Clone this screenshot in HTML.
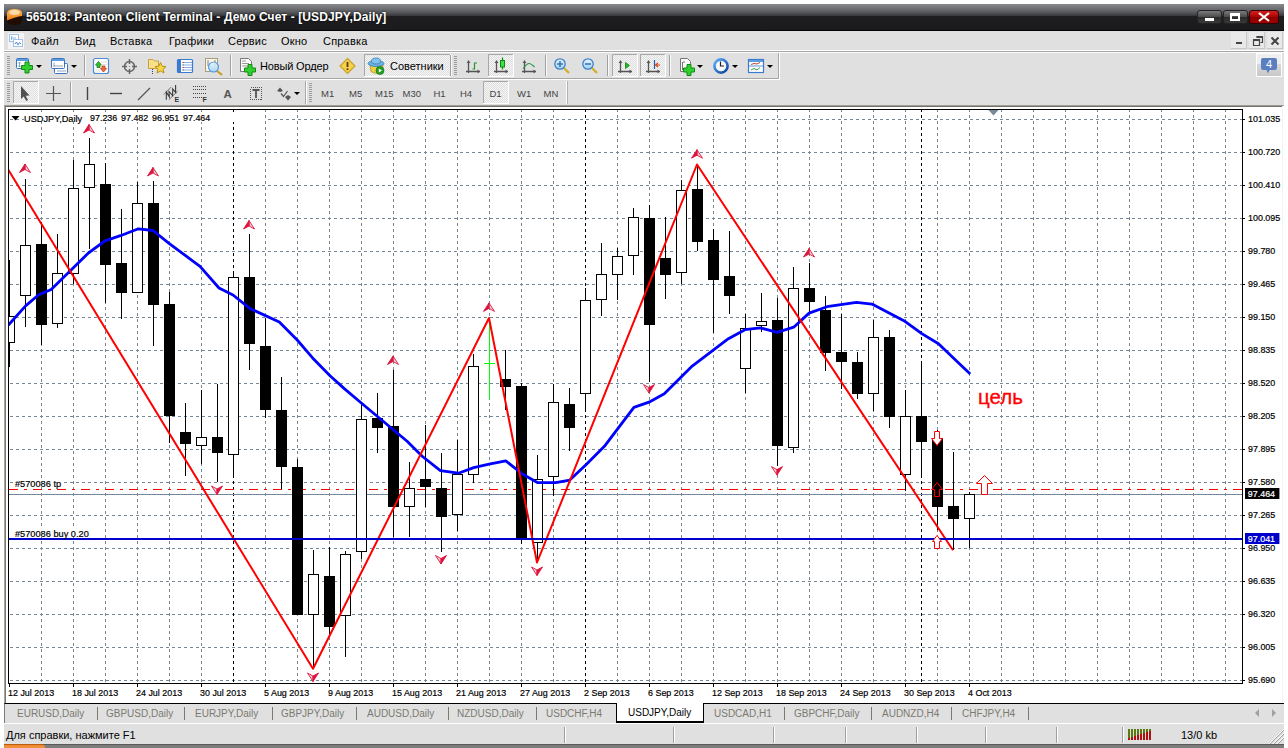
<!DOCTYPE html>
<html><head><meta charset="utf-8"><style>
html,body{margin:0;padding:0;width:1288px;height:748px;overflow:hidden;background:#fff;position:relative}
.ax{position:absolute;font:9.6px 'Liberation Sans', sans-serif;color:#000;white-space:nowrap;line-height:12px;transform:scaleX(0.93);transform-origin:0 0;-webkit-text-stroke:0.2px #000}
</style></head><body>
<div style="position:absolute;left:4px;top:4px;width:1280px;height:27px;background:linear-gradient(#8a8b8f 0px,#5a5b5f 8px,#3a3b3e 11.5px,#1e1e20 12.5px,#1b1b1d 25.5px,#000 26px)"></div>
<svg style="position:absolute;left:6px;top:8px" width="17" height="18"><defs><linearGradient id="ico" x1="0" y1="0" x2="0" y2="1"><stop offset="0" stop-color="#ffc060"/><stop offset="1" stop-color="#f07a10"/></linearGradient></defs><path d="M1 5Q1 1 8.5 1Q16 1 16 5V13Q16 17 8.5 17Q1 17 1 13Z" fill="#200c00"/><path d="M1 5Q1 1 8.5 1Q16 1 16 5V8Q10 8.5 1 12.5Z" fill="url(#ico)"/><ellipse cx="8.5" cy="4.5" rx="5" ry="2.5" fill="#fff" fill-opacity="0.55"/></svg>
<div style="position:absolute;left:26px;top:10px;letter-spacing:0.1px;font:bold 12px 'Liberation Sans', sans-serif;color:#fff;white-space:nowrap;text-shadow:0 0 2px #000">565018: Panteon Client Terminal - Демо Счет - [USDJPY,Daily]</div>
<div style="position:absolute;left:1197px;top:10px;width:25px;height:14px;border:1px solid #222;border-radius:3px;background:linear-gradient(#7a7a7a,#4a4a4a 50%,#2a2a2a 51%,#3a3a3a);box-sizing:border-box"></div>
<div style="position:absolute;left:1205px;top:18px;width:9px;height:3px;background:#fff"></div>
<div style="position:absolute;left:1223px;top:10px;width:25px;height:14px;border:1px solid #222;border-radius:3px;background:linear-gradient(#7a7a7a,#4a4a4a 50%,#2a2a2a 51%,#3a3a3a);box-sizing:border-box"></div>
<div style="position:absolute;left:1230px;top:13px;width:10px;height:8px;border:2px solid #fff;border-top-width:3px;box-sizing:border-box"></div>
<div style="position:absolute;left:1249px;top:10px;width:30px;height:14px;border:1px solid #300;border-radius:3px;background:linear-gradient(#d02020,#b00000 50%,#8a0000 51%,#a00000);box-sizing:border-box"></div>
<svg style="position:absolute;left:1258px;top:12px" width="12" height="10"><path d="M1 1L11 9M11 1L1 9" stroke="#fff" stroke-width="2.2"/></svg>
<div style="position:absolute;left:4px;top:31px;width:1280px;height:74px;background:#e0e0e0"></div>
<div style="position:absolute;left:4px;top:50px;width:1280px;height:1px;background:#fff"></div>
<div style="position:absolute;left:4px;top:51px;width:1280px;height:1px;background:#a6a6a6"></div><div style="position:absolute;left:4px;top:52px;width:1280px;height:1px;background:#fafafa"></div>
<div style="position:absolute;left:4px;top:78px;width:775px;height:1px;background:#a6a6a6"></div>
<div style="position:absolute;left:4px;top:79px;width:776px;height:1px;background:#fff"></div><div style="position:absolute;left:779px;top:52px;width:1px;height:27px;background:#fff"></div>
<svg style="position:absolute;left:8px;top:33px" width="16" height="16"><rect x="0" y="0" width="16" height="16" fill="#f4f4f4"/><rect x="1.5" y="1.5" width="9" height="7" fill="#fff" stroke="#4a8ad8" stroke-dasharray="1 1"/><rect x="5.5" y="6.5" width="9" height="7" fill="#fff" stroke="#4a8ad8" stroke-dasharray="1 1"/><path d="M7 11L8.5 9L10 12L11.5 9.5L13 11" stroke="#4a8ad8" fill="none"/><path d="M3.5 3V7M3 5H8" stroke="#6aa0e0" stroke-width="0.8"/></svg>
<div style="position:absolute;left:31px;top:35px;font:11px 'Liberation Sans', sans-serif;letter-spacing:0.2px;color:#000">Файл</div>
<div style="position:absolute;left:75px;top:35px;font:11px 'Liberation Sans', sans-serif;letter-spacing:0.2px;color:#000">Вид</div>
<div style="position:absolute;left:110px;top:35px;font:11px 'Liberation Sans', sans-serif;letter-spacing:0.2px;color:#000">Вставка</div>
<div style="position:absolute;left:169px;top:35px;font:11px 'Liberation Sans', sans-serif;letter-spacing:0.2px;color:#000">Графики</div>
<div style="position:absolute;left:228px;top:35px;font:11px 'Liberation Sans', sans-serif;letter-spacing:0.2px;color:#000">Сервис</div>
<div style="position:absolute;left:281px;top:35px;font:11px 'Liberation Sans', sans-serif;letter-spacing:0.2px;color:#000">Окно</div>
<div style="position:absolute;left:323px;top:35px;font:11px 'Liberation Sans', sans-serif;letter-spacing:0.2px;color:#000">Справка</div>
<div style="position:absolute;left:1231px;top:32px;width:16px;height:17px;background:#e9e9e9;border-right:1px solid #c8c8c8;border-bottom:1px solid #c8c8c8;box-sizing:border-box"></div>
<div style="position:absolute;left:1249px;top:32px;width:16px;height:17px;background:#e9e9e9;border-right:1px solid #c8c8c8;border-bottom:1px solid #c8c8c8;box-sizing:border-box"></div>
<div style="position:absolute;left:1267px;top:32px;width:16px;height:17px;background:#e9e9e9;border-right:1px solid #c8c8c8;border-bottom:1px solid #c8c8c8;box-sizing:border-box"></div>
<div style="position:absolute;left:1236px;top:42px;width:6px;height:2px;background:#444"></div>
<svg style="position:absolute;left:1252px;top:35px" width="12" height="12"><path d="M4.5 1.5H10.5V7.5H8.5M1.5 4.5H7.5V10.5H1.5Z" stroke="#444" fill="none" stroke-width="1.2"/><path d="M4.5 2H10.5M1.5 5H7.5" stroke="#444" stroke-width="2"/></svg>
<svg style="position:absolute;left:1270px;top:36px" width="10" height="10"><path d="M1.5 1.5L8.5 8.5M8.5 1.5L1.5 8.5" stroke="#444" stroke-width="2"/></svg>
<div style="position:absolute;left:4px;top:105px;width:1280px;height:598px;background:#fff;border-top:1px solid #a09d94;border-left:1px solid #a6a49c;box-sizing:border-box"></div><div style="position:absolute;left:5px;top:106px;width:1277px;height:1px;background:#74716a"></div><div style="position:absolute;left:5px;top:106px;width:1px;height:597px;background:#7d7a70"></div>
<div style="position:absolute;left:1282px;top:106px;width:1px;height:597px;background:#f4f4f4"></div>
<div style="position:absolute;left:4px;top:703px;width:1280px;height:20px;background:#e0e0e0;border-top:1px solid #000;border-left:1px solid #7d7a70;box-sizing:border-box"></div>
<div style="position:absolute;left:17px;top:708px;font:10px 'Liberation Sans', sans-serif;color:#7a7a70">EURUSD,Daily</div>
<div style="position:absolute;left:106px;top:708px;font:10px 'Liberation Sans', sans-serif;color:#7a7a70">GBPUSD,Daily</div>
<div style="position:absolute;left:195px;top:708px;font:10px 'Liberation Sans', sans-serif;color:#7a7a70">EURJPY,Daily</div>
<div style="position:absolute;left:281px;top:708px;font:10px 'Liberation Sans', sans-serif;color:#7a7a70">GBPJPY,Daily</div>
<div style="position:absolute;left:367px;top:708px;font:10px 'Liberation Sans', sans-serif;color:#7a7a70">AUDUSD,Daily</div>
<div style="position:absolute;left:457px;top:708px;font:10px 'Liberation Sans', sans-serif;color:#7a7a70">NZDUSD,Daily</div>
<div style="position:absolute;left:546px;top:708px;font:10px 'Liberation Sans', sans-serif;color:#7a7a70">USDCHF,H4</div>
<div style="position:absolute;left:714px;top:708px;font:10px 'Liberation Sans', sans-serif;color:#7a7a70">USDCAD,H1</div>
<div style="position:absolute;left:794px;top:708px;font:10px 'Liberation Sans', sans-serif;color:#7a7a70">GBPCHF,Daily</div>
<div style="position:absolute;left:882px;top:708px;font:10px 'Liberation Sans', sans-serif;color:#7a7a70">AUDNZD,H4</div>
<div style="position:absolute;left:962px;top:708px;font:10px 'Liberation Sans', sans-serif;color:#7a7a70">CHFJPY,H4</div>
<div style="position:absolute;left:97px;top:707px;width:1px;height:13px;background:#7a7a70"></div>
<div style="position:absolute;left:184px;top:707px;width:1px;height:13px;background:#7a7a70"></div>
<div style="position:absolute;left:272px;top:707px;width:1px;height:13px;background:#7a7a70"></div>
<div style="position:absolute;left:356px;top:707px;width:1px;height:13px;background:#7a7a70"></div>
<div style="position:absolute;left:448px;top:707px;width:1px;height:13px;background:#7a7a70"></div>
<div style="position:absolute;left:536px;top:707px;width:1px;height:13px;background:#7a7a70"></div>
<div style="position:absolute;left:784px;top:707px;width:1px;height:13px;background:#7a7a70"></div>
<div style="position:absolute;left:871px;top:707px;width:1px;height:13px;background:#7a7a70"></div>
<div style="position:absolute;left:951px;top:707px;width:1px;height:13px;background:#7a7a70"></div>
<div style="position:absolute;left:1028px;top:707px;width:1px;height:13px;background:#7a7a70"></div>
<div style="position:absolute;left:616px;top:703px;width:88px;height:20px;background:#fff;border:1px solid #000;border-top:none;border-bottom-width:2px;box-sizing:border-box;font:10px 'Liberation Sans', sans-serif;color:#000;padding:4px 0 0 11px">USDJPY,Daily</div>
<svg style="position:absolute;left:1255px;top:709px" width="22" height="8"><path d="M0 4L4 0V8Z M21 4L17 0V8Z" fill="#a0a0a0"/></svg>
<div style="position:absolute;left:4px;top:723px;width:1280px;height:21px;background:#e0e0e0;border-top:1px solid #fff;box-sizing:border-box"></div>
<div style="position:absolute;left:6px;top:729px;font:11px 'Liberation Sans', sans-serif;color:#000">Для справки, нажмите F1</div>
<div style="position:absolute;left:564px;top:727px;width:1px;height:16px;background:#a0a0a0;border-right:1px solid #fff"></div>
<div style="position:absolute;left:673px;top:727px;width:1px;height:16px;background:#a0a0a0;border-right:1px solid #fff"></div>
<div style="position:absolute;left:773px;top:727px;width:1px;height:16px;background:#a0a0a0;border-right:1px solid #fff"></div>
<div style="position:absolute;left:845px;top:727px;width:1px;height:16px;background:#a0a0a0;border-right:1px solid #fff"></div>
<div style="position:absolute;left:916px;top:727px;width:1px;height:16px;background:#a0a0a0;border-right:1px solid #fff"></div>
<div style="position:absolute;left:985px;top:727px;width:1px;height:16px;background:#a0a0a0;border-right:1px solid #fff"></div>
<div style="position:absolute;left:1056px;top:727px;width:1px;height:16px;background:#a0a0a0;border-right:1px solid #fff"></div>
<div style="position:absolute;left:1122px;top:727px;width:1px;height:16px;background:#a0a0a0;border-right:1px solid #fff"></div>
<svg style="position:absolute;left:1128px;top:729px" width="24" height="12"><rect x="0" y="0" width="2" height="11" fill="#5a7a10"/><rect x="0" y="9.0" width="2" height="2.0" fill="#b01010"/><rect x="3" y="0" width="2" height="11" fill="#5a7a10"/><rect x="3" y="8.0" width="2" height="3.0" fill="#b01010"/><rect x="6" y="0" width="2" height="11" fill="#5a7a10"/><rect x="6" y="7.0" width="2" height="4.0" fill="#b01010"/><rect x="9" y="0" width="2" height="11" fill="#5a7a10"/><rect x="9" y="6.0" width="2" height="5.0" fill="#b01010"/><rect x="12" y="0" width="2" height="11" fill="#5a7a10"/><rect x="12" y="5.0" width="2" height="6.0" fill="#b01010"/><rect x="15" y="0" width="2" height="11" fill="#5a7a10"/><rect x="15" y="4.0" width="2" height="7.0" fill="#b01010"/><rect x="18" y="0" width="2" height="11" fill="#5a7a10"/><rect x="18" y="3.0" width="2" height="8.0" fill="#b01010"/><rect x="21" y="0" width="2" height="11" fill="#5a7a10"/><rect x="21" y="2.0" width="2" height="9.0" fill="#b01010"/></svg>
<div style="position:absolute;left:1181px;top:729px;font:11px 'Liberation Sans', sans-serif;color:#000">13/0 kb</div>
<svg style="position:absolute;left:1268px;top:728px" width="16" height="16"><path d="M16 1L1 16M16 5L5 16M16 9L9 16" stroke="#fff" stroke-width="1"/><path d="M16 2L2 16M16 6L6 16M16 10L10 16" stroke="#a0a0a0" stroke-width="1"/></svg>
<div style="position:absolute;left:4px;top:744px;width:1280px;height:4px;background:linear-gradient(#5a5a5a 0,#5a5a5a 1px,#7d7d7d 1px)"></div>
<div style="position:absolute;left:4px;top:744px;width:41px;height:4px;background:linear-gradient(#b85a10 0,#c06010 1px,#f08a30 1.5px,#f49040);border-radius:0 4px 0 0"></div>
<svg width="1288" height="106" style="position:absolute;left:0;top:0">
<defs><pattern id="chk" width="2" height="2" patternUnits="userSpaceOnUse"><rect width="2" height="2" fill="#f6f6f6"/><rect width="1" height="1" fill="#dedede"/><rect x="1" y="1" width="1" height="1" fill="#dedede"/></pattern><linearGradient id="clk" x1="0" y1="0" x2="1" y2="1"><stop offset="0" stop-color="#5ab0ff"/><stop offset="1" stop-color="#0a3e98"/></linearGradient><linearGradient id="mag" x1="0" y1="0" x2="0" y2="1"><stop offset="0" stop-color="#e8f6ff"/><stop offset="1" stop-color="#9fd0f0"/></linearGradient><linearGradient id="nb" x1="0" y1="0" x2="0" y2="1"><stop offset="0" stop-color="#f0f0f0"/><stop offset="0.45" stop-color="#ececec"/><stop offset="0.46" stop-color="#d8d8d8"/><stop offset="1" stop-color="#c8c8c8"/></linearGradient></defs>
<rect x="7" y="56" width="3" height="1" fill="#9c9c9c"/><rect x="7" y="58" width="3" height="1" fill="#9c9c9c"/><rect x="7" y="60" width="3" height="1" fill="#9c9c9c"/><rect x="7" y="62" width="3" height="1" fill="#9c9c9c"/><rect x="7" y="64" width="3" height="1" fill="#9c9c9c"/><rect x="7" y="66" width="3" height="1" fill="#9c9c9c"/><rect x="7" y="68" width="3" height="1" fill="#9c9c9c"/><rect x="7" y="70" width="3" height="1" fill="#9c9c9c"/><rect x="7" y="72" width="3" height="1" fill="#9c9c9c"/><rect x="7" y="74" width="3" height="1" fill="#9c9c9c"/>
<rect x="16.5" y="58.5" width="12" height="10" rx="1" fill="#fff" stroke="#3a74c0"/><rect x="17" y="59" width="11" height="2" fill="#5b9be0"/>
<path d="M19.5 62V67M18 63.5L19.5 62L21 63.5M18 65.5L19.5 67L21 65.5" stroke="#7890a8" stroke-width="0.8" fill="none"/>
<path d="M25.0 62.0H29.0V65.5H32.5V69.5H29.0V73.0H25.0V69.5H21.5V65.5H25.0Z" fill="#30d030" stroke="#138a13" stroke-width="1"/>
<path d="M36 65H42L39 68Z" fill="#000"/>
<rect x="54.5" y="63.5" width="13" height="10" rx="1" fill="#fff" stroke="#3a74c0"/><rect x="51.5" y="58.5" width="13" height="10" rx="1" fill="#fff" stroke="#3a74c0"/><rect x="52" y="59" width="12" height="2" fill="#5b9be0"/>
<path d="M54 62.5V67M54 66H63M57 71H66" stroke="#7890a8" stroke-width="0.8" fill="none"/>
<path d="M71 65H77L74 68Z" fill="#000"/>
<rect x="84" y="55" width="1" height="21" fill="#a0a0a0"/><rect x="85" y="55" width="1" height="21" fill="#fafafa"/>
<rect x="93.5" y="58.5" width="15" height="15" rx="2" fill="#fff" stroke="#4a8ad8" stroke-width="1.2"/>
<path d="M95.5 65L98.5 61.5L101.5 65H100V67.5H97V65Z" fill="#30c030" stroke="#158015" stroke-width="0.8"/>
<path d="M100.5 68.5H102V66H105V68.5H106.5L103.5 72Z" fill="#f06a3a" stroke="#c03a10" stroke-width="0.8"/>
<path d="M101 62H107M101 64.5H107M95 70H100M95 72H100" stroke="#d0d0d0" stroke-width="0.6"/>
<circle cx="129.5" cy="66.5" r="5" fill="none" stroke="#666" stroke-width="1.5"/><path d="M122 66.5H127M132 66.5H137M129.5 59V64M129.5 69V74" stroke="#666" stroke-width="1.5"/><rect x="129" y="66" width="1" height="1" fill="#888"/>
<path d="M148.5 59.5H153L154.5 61H158.5V68.5H148.5Z" fill="#f8e08a" stroke="#c8a040" stroke-width="1"/>
<path d="M160.5 62.5L162.2 66.2L166 66.6L163.1 69.2L164 73L160.5 71L157 73L157.9 69.2L155 66.6L158.8 66.2Z" fill="#f8d840" stroke="#b8901a" stroke-width="1"/>
<path d="M152.5 69V75" stroke="#444" stroke-width="1" stroke-dasharray="1 1"/>
<rect x="177.5" y="59.5" width="15" height="13" rx="1" fill="#fff" stroke="#3a7ad0" stroke-width="1.2"/><rect x="178" y="60" width="3" height="12" fill="#3a7ad0"/>
<path d="M183 62.5H192M183 65H192M183 67.5H192M183 70H192" stroke="#3a7ad0" stroke-width="0.6"/><path d="M182.5 62.5h1M182.5 67.5h1" stroke="#e00" stroke-width="1"/><path d="M182.5 65h1M182.5 70h1" stroke="#222" stroke-width="1"/>
<rect x="205.5" y="58.5" width="12" height="13" fill="#faf6ea" stroke="#a89c80"/>
<path d="M208 60V66M215 60V66" stroke="#666" stroke-width="0.8"/>
<path d="M216.5 70.5L222 75" stroke="#c8a020" stroke-width="2.2"/><circle cx="213.5" cy="67" r="5" fill="url(#mag)" fill-opacity="0.85" stroke="#5aa0e0" stroke-width="1.2"/>
<rect x="230" y="55" width="1" height="21" fill="#a0a0a0"/><rect x="231" y="55" width="1" height="21" fill="#fafafa"/>
<path d="M240.5 58.5H248.5L251.5 61.5V71.5H240.5Z" fill="#fafafa" stroke="#777"/><path d="M242 61H246M242 63.5H249M242 66H249" stroke="#999" stroke-width="1"/>
<path d="M248.0 64.5H252.0V68.0H255.5V72.0H252.0V75.5H248.0V72.0H244.5V68.0H248.0Z" fill="#30d030" stroke="#138a13" stroke-width="1"/>
<path d="M347.5 58.5L355 66L347.5 73.5L340 66Z" fill="#f6d24a" stroke="#c8a02a" stroke-width="1.2"/><path d="M347.5 62V67" stroke="#5a3a10" stroke-width="1.8"/><rect x="346.6" y="68.3" width="1.8" height="1.8" fill="#5a3a10"/>
<rect x="364" y="54" width="87" height="23" fill="url(#chk)"/><path d="M364.5 77V54.5H451" stroke="#a8a8a8" fill="none"/><path d="M364 76.5H450.5V54" stroke="#fff" fill="none"/>
<path d="M370 65L371 71.5Q376 75 382 71.5L383 65Z" fill="#f0d040" stroke="#b09020" stroke-width="0.8"/>
<ellipse cx="376" cy="63.5" rx="8" ry="3" fill="#6ab0e0" stroke="#3a80b8" stroke-width="0.8"/><ellipse cx="376" cy="61" rx="4.5" ry="3" fill="#80c4ee" stroke="#3a80b8" stroke-width="0.8"/>
<circle cx="380" cy="70.5" r="4" fill="#22a022" stroke="#116611" stroke-width="0.6"/><path d="M378.8 68.5V72.5L382 70.5Z" fill="#fff"/>
<rect x="450" y="55" width="1" height="21" fill="#a0a0a0"/><rect x="451" y="55" width="1" height="21" fill="#fafafa"/>
<rect x="454" y="56" width="3" height="1" fill="#9c9c9c"/><rect x="454" y="58" width="3" height="1" fill="#9c9c9c"/><rect x="454" y="60" width="3" height="1" fill="#9c9c9c"/><rect x="454" y="62" width="3" height="1" fill="#9c9c9c"/><rect x="454" y="64" width="3" height="1" fill="#9c9c9c"/><rect x="454" y="66" width="3" height="1" fill="#9c9c9c"/><rect x="454" y="68" width="3" height="1" fill="#9c9c9c"/><rect x="454" y="70" width="3" height="1" fill="#9c9c9c"/><rect x="454" y="72" width="3" height="1" fill="#9c9c9c"/><rect x="454" y="74" width="3" height="1" fill="#9c9c9c"/>
<path d="M468.5 60.5V73 M466.0 71.5H480" stroke="#555" stroke-width="1.3" fill="none"/><path d="M466.5 63.0L468.5 60.5L470.5 63.0Z M477.5 69.5L480 71.5L477.5 73.5Z" fill="#555"/>
<path d="M472.5 69H474.5V63H477" stroke="#229922" stroke-width="1.2" fill="none"/>
<rect x="488" y="54" width="26" height="23" fill="url(#chk)"/><path d="M488.5 77V54.5H514" stroke="#a8a8a8" fill="none"/><path d="M488 76.5H513.5V54" stroke="#fff" fill="none"/>
<path d="M496.5 60.5V73 M494.0 71.5H508" stroke="#555" stroke-width="1.3" fill="none"/><path d="M494.5 63.0L496.5 60.5L498.5 63.0Z M505.5 69.5L508 71.5L505.5 73.5Z" fill="#555"/>
<path d="M502.5 57.5V69.5" stroke="#118811" stroke-width="1.2"/><rect x="500.5" y="60.5" width="4" height="6.5" fill="#44e044" stroke="#118811" stroke-width="1"/>
<path d="M524.5 60.5V73 M522.0 71.5H536" stroke="#555" stroke-width="1.3" fill="none"/><path d="M522.5 63.0L524.5 60.5L526.5 63.0Z M533.5 69.5L536 71.5L533.5 73.5Z" fill="#555"/>
<path d="M523 68.5Q527 63.5 529 63.5Q531 63.5 534.5 67" stroke="#229944" stroke-width="1.1" fill="none"/>
<rect x="545" y="55" width="1" height="21" fill="#a0a0a0"/><rect x="546" y="55" width="1" height="21" fill="#fafafa"/>
<path d="M564 68L569 73" stroke="#d0b030" stroke-width="2.4"/>
<circle cx="560" cy="64" r="5.2" fill="url(#mag)" stroke="#3a80c8" stroke-width="1.3"/>
<path d="M557 64H563M560 61V67" stroke="#3a78b0" stroke-width="1.6"/>
<path d="M592 68L597 73" stroke="#d0b030" stroke-width="2.4"/>
<circle cx="588" cy="64" r="5.2" fill="url(#mag)" stroke="#3a80c8" stroke-width="1.3"/>
<path d="M585 64H591" stroke="#3a78b0" stroke-width="1.6"/>
<rect x="607" y="55" width="1" height="21" fill="#a0a0a0"/><rect x="608" y="55" width="1" height="21" fill="#fafafa"/>
<rect x="612" y="54" width="26" height="23" fill="url(#chk)"/><path d="M612.5 77V54.5H638" stroke="#a8a8a8" fill="none"/><path d="M612 76.5H637.5V54" stroke="#fff" fill="none"/>
<path d="M620.5 60.5V73 M618.0 71.5H632" stroke="#555" stroke-width="1.3" fill="none"/><path d="M618.5 63.0L620.5 60.5L622.5 63.0Z M629.5 69.5L632 71.5L629.5 73.5Z" fill="#555"/>
<path d="M625.5 62.5V68.5L629.5 65.5Z" fill="#22bb22" stroke="#118811" stroke-width="0.8"/>
<rect x="640" y="54" width="26" height="23" fill="url(#chk)"/><path d="M640.5 77V54.5H666" stroke="#a8a8a8" fill="none"/><path d="M640 76.5H665.5V54" stroke="#fff" fill="none"/>
<path d="M648.5 60.5V73 M646.0 71.5H660" stroke="#555" stroke-width="1.3" fill="none"/><path d="M646.5 63.0L648.5 60.5L650.5 63.0Z M657.5 69.5L660 71.5L657.5 73.5Z" fill="#555"/>
<path d="M654.5 60V69" stroke="#2060b0" stroke-width="1.2"/><path d="M660 65H656.5M658 63L655.5 65L658 67" stroke="#e04010" stroke-width="1.2" fill="none"/>
<rect x="669" y="55" width="1" height="21" fill="#a0a0a0"/><rect x="670" y="55" width="1" height="21" fill="#fafafa"/>
<path d="M680.5 58.5H687.5L690.5 61.5V71.5H680.5Z" fill="#fafafa" stroke="#777"/><path d="M682.5 62V70M683 62H685" stroke="#555" stroke-width="0.8"/>
<path d="M687.0 64.5H691.0V68.0H694.5V72.0H691.0V75.5H687.0V72.0H683.5V68.0H687.0Z" fill="#30d030" stroke="#138a13" stroke-width="1"/>
<path d="M697 65H703L700 68Z" fill="#000"/>
<circle cx="721" cy="66" r="6.6" fill="#f6f8fa" stroke="url(#clk)" stroke-width="2.6"/><path d="M720.5 61.5V66H724" stroke="#222" stroke-width="1.2" fill="none"/><path d="M721 59.8v0.8M726.4 66h-0.8M721 72.2v-0.8M715.6 66h0.8" stroke="#999" stroke-width="0.7"/>
<path d="M732 65H738L735 68Z" fill="#000"/>
<rect x="748.5" y="59.5" width="15" height="13" fill="#fff" stroke="#3a7ad0" stroke-width="1.2"/><rect x="749" y="60" width="14" height="2" fill="#5b9be0"/><path d="M749 66H763" stroke="#3a7ad0" stroke-width="0.8"/>
<path d="M751 64.5L754 63.5L757 64L760 62.5" stroke="#b03020" stroke-width="0.9" fill="none"/><path d="M751 70L754 68.5L757 70L760 67.5" stroke="#209030" stroke-width="0.9" fill="none"/>
<path d="M767 65H773L770 68Z" fill="#000"/>
<rect x="778" y="53" width="1" height="25" fill="#a8a8a8"/>
<rect x="1256.5" y="53.5" width="25" height="23" fill="url(#nb)" stroke="#fff"/>
<path d="M1263 58H1275Q1277 58 1277 60V68Q1277 70 1275 70H1269.5L1268 73.5L1266.5 70H1263Q1261 70 1261 68V60Q1261 58 1263 58Z" fill="#5a7fc0"/>
<text x="1266" y="68" font-family="Liberation Sans" font-size="11" fill="#fff">4</text>
<rect x="7" y="83" width="3" height="1" fill="#9c9c9c"/><rect x="7" y="85" width="3" height="1" fill="#9c9c9c"/><rect x="7" y="87" width="3" height="1" fill="#9c9c9c"/><rect x="7" y="89" width="3" height="1" fill="#9c9c9c"/><rect x="7" y="91" width="3" height="1" fill="#9c9c9c"/><rect x="7" y="93" width="3" height="1" fill="#9c9c9c"/><rect x="7" y="95" width="3" height="1" fill="#9c9c9c"/><rect x="7" y="97" width="3" height="1" fill="#9c9c9c"/><rect x="7" y="99" width="3" height="1" fill="#9c9c9c"/><rect x="7" y="101" width="3" height="1" fill="#9c9c9c"/>
<rect x="13" y="81" width="26" height="23" fill="url(#chk)"/><path d="M13.5 104V81.5H39" stroke="#a8a8a8" fill="none"/><path d="M13 103.5H38.5V81" stroke="#fff" fill="none"/>
<path d="M21 86V99L23.7 96.5L26.2 101L28 100L25.7 95.8L29.5 95.5Z" fill="#505050"/>
<path d="M46 93.5H61M53.5 86V101" stroke="#555" stroke-width="1.2"/>
<rect x="70" y="82" width="1" height="21" fill="#a0a0a0"/><rect x="71" y="82" width="1" height="21" fill="#fafafa"/>
<path d="M87.5 87V100" stroke="#444" stroke-width="1.4"/>
<path d="M110 93.5H122" stroke="#444" stroke-width="1.4"/>
<path d="M138 100L150 88" stroke="#555" stroke-width="1.2"/>
<path d="M163.8 94.5L171.4 86.9M168.9 99.7L177.7 91.1" stroke="#666" stroke-width="0.9"/><path d="M166.3 99.7L166.4 92.2L169.3 96.8L169 91.5L172.6 95.5L172.7 88.9L175.6 92.4L175.6 85" stroke="#3a3a3a" stroke-width="1.1" fill="none"/>
<text x="174.6" y="101.9" font-family="Liberation Sans" font-weight="bold" font-size="7" fill="#333">E</text>
<path d="M193 86.5H206M193 89.5H206M193 93.5H206M193 97.5H202" stroke="#444" stroke-width="1" stroke-dasharray="1 1" shape-rendering="crispEdges"/>
<text x="202.6" y="101.9" font-family="Liberation Sans" font-weight="bold" font-size="7" fill="#333">F</text>
<text x="223.5" y="98" font-family="Liberation Sans" font-weight="bold" font-size="11.5" fill="#555">A</text>
<rect x="250.5" y="87.5" width="11" height="12" fill="none" stroke="#555" stroke-width="1" stroke-dasharray="1 1" shape-rendering="crispEdges"/><path d="M252.5 90H259.5M256 90V98" stroke="#555" stroke-width="1.8"/>
<path d="M277 91L280 87.5L283 91L280 92Z" fill="#555"/><path d="M281 93.5L283.5 96.5L287.5 91" stroke="#555" stroke-width="1.2" fill="none"/><path d="M285 97L288 95L291 97L288 100.5Z" fill="#555"/>
<path d="M294 92H300L297 95Z" fill="#000"/>
<rect x="305" y="81" width="1" height="23" fill="#a8a8a8"/><rect x="306" y="81" width="1" height="23" fill="#fff"/>
<rect x="309" y="83" width="3" height="1" fill="#9c9c9c"/><rect x="309" y="85" width="3" height="1" fill="#9c9c9c"/><rect x="309" y="87" width="3" height="1" fill="#9c9c9c"/><rect x="309" y="89" width="3" height="1" fill="#9c9c9c"/><rect x="309" y="91" width="3" height="1" fill="#9c9c9c"/><rect x="309" y="93" width="3" height="1" fill="#9c9c9c"/><rect x="309" y="95" width="3" height="1" fill="#9c9c9c"/><rect x="309" y="97" width="3" height="1" fill="#9c9c9c"/><rect x="309" y="99" width="3" height="1" fill="#9c9c9c"/><rect x="309" y="101" width="3" height="1" fill="#9c9c9c"/>
<rect x="483" y="81" width="26" height="23" fill="url(#chk)"/><path d="M483.5 104V81.5H509" stroke="#a8a8a8" fill="none"/><path d="M483 103.5H508.5V81" stroke="#fff" fill="none"/>
<rect x="566" y="81" width="1" height="23" fill="#fff"/><rect x="567" y="81" width="1" height="23" fill="#b0b0b0"/>
</svg>
<div style="position:absolute;left:260px;top:59.5px;font:11px 'Liberation Sans', sans-serif;letter-spacing:-0.15px;color:#000;white-space:nowrap">Новый Ордер</div>
<div style="position:absolute;left:390px;top:59.5px;font:11px 'Liberation Sans', sans-serif;color:#000;white-space:nowrap">Советники</div>
<div style="position:absolute;left:321px;top:88px;font:9.5px 'Liberation Sans', sans-serif;color:#444;white-space:nowrap">M1</div>
<div style="position:absolute;left:349px;top:88px;font:9.5px 'Liberation Sans', sans-serif;color:#444;white-space:nowrap">M5</div>
<div style="position:absolute;left:375px;top:88px;font:9.5px 'Liberation Sans', sans-serif;color:#444;white-space:nowrap">M15</div>
<div style="position:absolute;left:402.5px;top:88px;font:9.5px 'Liberation Sans', sans-serif;color:#444;white-space:nowrap">M30</div>
<div style="position:absolute;left:433.5px;top:88px;font:9.5px 'Liberation Sans', sans-serif;color:#444;white-space:nowrap">H1</div>
<div style="position:absolute;left:460px;top:88px;font:9.5px 'Liberation Sans', sans-serif;color:#444;white-space:nowrap">H4</div>
<div style="position:absolute;left:489.5px;top:88px;font:9.5px 'Liberation Sans', sans-serif;color:#444;white-space:nowrap">D1</div>
<div style="position:absolute;left:517px;top:88px;font:9.5px 'Liberation Sans', sans-serif;color:#444;white-space:nowrap">W1</div>
<div style="position:absolute;left:543.5px;top:88px;font:9.5px 'Liberation Sans', sans-serif;color:#444;white-space:nowrap">MN</div>
<svg width="1288" height="748" style="position:absolute;left:0;top:0">
<defs><clipPath id="pc"><rect x="9" y="110" width="1233" height="573"/></clipPath></defs>
<path d="M10 119.5H1242 M10 152.5H1242 M10 185.5H1242 M10 218.5H1242 M10 251.5H1242 M10 284.5H1242 M10 317.5H1242 M10 350.5H1242 M10 383.5H1242 M10 416.5H1242 M10 449.5H1242 M10 482.5H1242 M10 515.5H1242 M10 548.5H1242 M10 581.5H1242 M10 614.5H1242 M10 647.5H1242 M10 680.5H1242 M41.5 109V683 M73.5 109V683 M105.5 109V683 M137.5 109V683 M169.5 109V683 M201.5 109V683 M265.5 109V683 M297.5 109V683 M329.5 109V683 M361.5 109V683 M393.5 109V683 M425.5 109V683 M457.5 109V683 M489.5 109V683 M521.5 109V683 M553.5 109V683 M617.5 109V683 M649.5 109V683 M681.5 109V683 M713.5 109V683 M745.5 109V683 M777.5 109V683 M809.5 109V683 M841.5 109V683 M873.5 109V683 M905.5 109V683 M937.5 109V683 M969.5 109V683 M1001.5 109V683 M1033.5 109V683 M1065.5 109V683 M1097.5 109V683 M1129.5 109V683 M1161.5 109V683 M1193.5 109V683 M1225.5 109V683" stroke="#778899" stroke-width="1" stroke-dasharray="3 3" fill="none" shape-rendering="crispEdges"/>
<path d="M233.5 109V683 M585.5 109V683 M921.5 109V683" stroke="#000" stroke-width="1" stroke-dasharray="3 3" fill="none" shape-rendering="crispEdges"/>
<g clip-path="url(#pc)">
<path d="M9 489.5H1242" stroke="#ff0000" stroke-width="1" stroke-dasharray="9 6 3 6" shape-rendering="crispEdges"/>
<path d="M9 494.5H1242" stroke="#778899" stroke-width="1" shape-rendering="crispEdges"/>
<path d="M9.5 260V316M9.5 343V367 M25.5 179V245M25.5 296V327 M41.5 222V244M41.5 325V345 M57.5 234V273M57.5 324V328 M73.5 160V188M73.5 274V284 M89.5 138V164M89.5 188V249 M105.5 163V184M105.5 265V303 M121.5 209V263M121.5 293V319 M137.5 182V203M137.5 293V293 M153.5 181V203M153.5 305V346 M169.5 292V304M169.5 416V443 M185.5 403V432M185.5 444V476 M201.5 390V437M201.5 446V464 M217.5 384V437M217.5 453V482 M233.5 272V277M233.5 455V478 M249.5 234V277M249.5 344V370 M265.5 318V346M265.5 410V418 M281.5 377V410M281.5 467V489 M297.5 459V467M297.5 615V615 M313.5 550V574M313.5 615V669 M329.5 547V576M329.5 627V634 M345.5 551V554M345.5 616V657 M361.5 405V419M361.5 552V559 M377.5 393V418M377.5 428V453 M393.5 370V426M393.5 507V537 M409.5 462V488M409.5 507V537 M425.5 425V479M425.5 487V507 M441.5 453V488M441.5 517V552 M457.5 440V474M457.5 515V531 M473.5 354V366M473.5 475V483 M505.5 350V379M505.5 387V410 M521.5 383V386M521.5 540V544 M537.5 455V479M537.5 543V562 M553.5 384V402M553.5 477V496 M569.5 388V404M569.5 428V451 M585.5 288V300M585.5 394V410 M601.5 243V274M601.5 300V316 M617.5 248V256M617.5 275V300 M633.5 208V217M633.5 256V275 M649.5 205V218M649.5 325V382 M665.5 217V258M665.5 275V299 M681.5 180V190M681.5 273V284 M697.5 164V189M697.5 242V251 M713.5 229V240M713.5 280V333 M729.5 231V276M729.5 296V314 M745.5 314V328M745.5 369V393 M761.5 293V321M761.5 326V332 M777.5 298V320M777.5 446V466 M793.5 267V288M793.5 448V453 M809.5 263V288M809.5 302V312 M825.5 296V310M825.5 353V371 M841.5 314V352M841.5 362V389 M857.5 352V362M857.5 394V399 M873.5 320V337M873.5 394V411 M889.5 330V337M889.5 417V428 M905.5 390V416M905.5 475V491 M921.5 362V416M921.5 442V478 M937.5 430V438M937.5 507V530 M953.5 452V506M953.5 519V550 M969.5 492V494M969.5 519V548" stroke="#000" stroke-width="1" fill="none" shape-rendering="crispEdges"/>
<path d="M36 244H47V325H36Z M100 184H111V265H100Z M116 263H127V293H116Z M148 203H159V305H148Z M164 304H175V416H164Z M180 432H191V444H180Z M212 437H223V453H212Z M244 277H255V344H244Z M260 346H271V410H260Z M276 410H287V467H276Z M292 467H303V615H292Z M324 576H335V627H324Z M372 418H383V428H372Z M388 426H399V507H388Z M420 479H431V487H420Z M436 488H447V517H436Z M500 379H511V387H500Z M516 386H527V540H516Z M564 404H575V428H564Z M644 218H655V325H644Z M660 258H671V275H660Z M692 189H703V242H692Z M708 240H719V280H708Z M724 276H735V296H724Z M772 320H783V446H772Z M804 288H815V302H804Z M820 310H831V353H820Z M836 352H847V362H836Z M852 362H863V394H852Z M884 337H895V417H884Z M916 416H927V442H916Z M932 438H943V507H932Z M948 506H959V519H948Z" fill="#000" shape-rendering="crispEdges"/>
<path d="M4.5 316.5H14.5V342.5H4.5Z M20.5 245.5H30.5V295.5H20.5Z M52.5 273.5H62.5V323.5H52.5Z M68.5 188.5H78.5V273.5H68.5Z M84.5 164.5H94.5V187.5H84.5Z M132.5 203.5H142.5V292.5H132.5Z M196.5 437.5H206.5V445.5H196.5Z M228.5 277.5H238.5V454.5H228.5Z M308.5 574.5H318.5V614.5H308.5Z M340.5 554.5H350.5V615.5H340.5Z M356.5 419.5H366.5V551.5H356.5Z M404.5 488.5H414.5V506.5H404.5Z M452.5 474.5H462.5V514.5H452.5Z M468.5 366.5H478.5V474.5H468.5Z M532.5 479.5H542.5V542.5H532.5Z M548.5 402.5H558.5V476.5H548.5Z M580.5 300.5H590.5V393.5H580.5Z M596.5 274.5H606.5V299.5H596.5Z M612.5 256.5H622.5V274.5H612.5Z M628.5 217.5H638.5V255.5H628.5Z M676.5 190.5H686.5V272.5H676.5Z M740.5 328.5H750.5V368.5H740.5Z M756.5 321.5H766.5V325.5H756.5Z M788.5 288.5H798.5V447.5H788.5Z M868.5 337.5H878.5V393.5H868.5Z M900.5 416.5H910.5V474.5H900.5Z M964.5 494.5H974.5V518.5H964.5Z" fill="#fff" stroke="#000" stroke-width="1" shape-rendering="crispEdges"/>
<path d="M489.5 318V399M484 363.5H495" stroke="#00ff00" stroke-width="1" fill="none" shape-rendering="crispEdges"/>
<polyline points="8,325.5 25.6,305.9 38.4,295 51.2,289.5 88.4,253 105,240.8 120.4,235.7 138.4,228.8 153,230.5 169,243.3 200,266.4 219,288 233,295 249.8,308.4 279.3,322 297.2,340 312.6,357.9 330,375.8 344.3,388.6 361,402.7 407.1,441.2 422.5,456.5 440.4,470.6 458.4,473.2 473.7,467.6 489.1,464.2 505.8,460.9 522.4,474 537.8,482.7 555.7,482.7 569.8,480.1 586.5,464.2 604.4,446.3 633.9,407.3 649,402.2 664.3,393.8 691.2,366.9 728.4,338.7 745,329.7 760.4,327.9 777.1,332.3 793.7,327.2 809.1,313.1 827,306.7 856.5,302.3 871.9,304.1 903.9,320.7 921.8,333.6 938.5,343.8 946.6,351.5 970.2,374" stroke="#0000ff" stroke-width="2.8" fill="none" stroke-linejoin="round"/>
<polyline points="8,169.2 313,668.7 489,318 537,562.5 697,164.5 953,550.2" stroke="#ff0000" stroke-width="2" fill="none" stroke-linejoin="round"/>
<path d="M9 538.5H1242" stroke="#0000cd" stroke-width="2" shape-rendering="crispEdges"/>
<path d="M30.5 172.5L25 164.0L25 169.5Z M94.5 133L89 124.5L89 130Z M158.5 176L153 167.5L153 173Z M254.5 229L249 220.5L249 226Z M398.5 364.5L393 356.0L393 361.5Z M494.5 311.4L489 302.9L489 308.4Z M702.5 158.2L697 149.7L697 155.2Z M814.5 257L809 248.5L809 254Z M211.5 486L217 494.5L217 489Z M307.5 673L313 681.5L313 676Z M435.5 555.5L441 564.0L441 558.5Z M531.5 567L537 575.5L537 570Z M643.5 384.6L649 393.1L649 387.6Z M771.5 466.6L777 475.1L777 469.6Z" fill="#f7d0d8" stroke="#dc143c" stroke-width="0.9" stroke-linejoin="round"/>
<path d="M19.5 172.5L25 164.0L25 169.5Z M83.5 133L89 124.5L89 130Z M147.5 176L153 167.5L153 173Z M243.5 229L249 220.5L249 226Z M387.5 364.5L393 356.0L393 361.5Z M483.5 311.4L489 302.9L489 308.4Z M691.5 158.2L697 149.7L697 155.2Z M803.5 257L809 248.5L809 254Z M222.5 486L217 494.5L217 489Z M318.5 673L313 681.5L313 676Z M446.5 555.5L441 564.0L441 558.5Z M542.5 567L537 575.5L537 570Z M654.5 384.6L649 393.1L649 387.6Z M782.5 466.6L777 475.1L777 469.6Z" fill="#dc143c" stroke="#dc143c" stroke-width="0.9" stroke-linejoin="round"/>
<path d="M981.5 494.5V483.5H976.5L984.5 475.5L992.5 483.5H987.5V494.5Z" fill="#fff" stroke="#ff0000" stroke-width="1"/>
<path d="M934.5 496.5V489.5H931.5L937 482.5L942.5 489.5H939.5V496.5Z" fill="none" stroke="#ff0000" stroke-width="1"/>
<path d="M934.5 548.5V541.5H932.5L937 535.5L941.5 541.5H939.5V548.5Z" fill="#fff" stroke="#ff0000" stroke-width="1"/>
<path d="M934.5 431.5V438.5H931.5L937 445.5L942.5 438.5H939.5V431.5Z" fill="#fff" stroke="#ff0000" stroke-width="1"/>
</g>
<path d="M988.5 110H998.5L993.5 115.5Z" fill="#778899"/>
<rect x="8.5" y="109.5" width="1233.5" height="573.5" fill="none" stroke="#000" stroke-width="1" shape-rendering="crispEdges"/>
<path d="M1242 119.5H1245 M1242 152.5H1245 M1242 185.5H1245 M1242 218.5H1245 M1242 251.5H1245 M1242 284.5H1245 M1242 317.5H1245 M1242 350.5H1245 M1242 383.5H1245 M1242 416.5H1245 M1242 449.5H1245 M1242 482.5H1245 M1242 515.5H1245 M1242 548.5H1245 M1242 581.5H1245 M1242 614.5H1245 M1242 647.5H1245 M1242 680.5H1245" stroke="#000" stroke-width="1" shape-rendering="crispEdges"/>
<path d="M9.5 683V687 M73.5 683V687 M137.5 683V687 M201.5 683V687 M265.5 683V687 M329.5 683V687 M393.5 683V687 M457.5 683V687 M521.5 683V687 M585.5 683V687 M649.5 683V687 M713.5 683V687 M777.5 683V687 M841.5 683V687 M905.5 683V687 M969.5 683V687" stroke="#000" stroke-width="1" shape-rendering="crispEdges"/>
</svg>
<div class="ax" style="left:1248px;top:112.5px">101.035</div>
<div class="ax" style="left:1248px;top:145.5px">100.720</div>
<div class="ax" style="left:1248px;top:178.5px">100.410</div>
<div class="ax" style="left:1248px;top:211.5px">100.095</div>
<div class="ax" style="left:1248px;top:244.5px">99.780</div>
<div class="ax" style="left:1248px;top:277.5px">99.465</div>
<div class="ax" style="left:1248px;top:310.5px">99.150</div>
<div class="ax" style="left:1248px;top:343.5px">98.835</div>
<div class="ax" style="left:1248px;top:376.5px">98.520</div>
<div class="ax" style="left:1248px;top:409.5px">98.205</div>
<div class="ax" style="left:1248px;top:442.5px">97.895</div>
<div class="ax" style="left:1248px;top:475.5px">97.580</div>
<div class="ax" style="left:1248px;top:508.5px">97.265</div>
<div class="ax" style="left:1248px;top:541.5px">96.950</div>
<div class="ax" style="left:1248px;top:574.5px">96.635</div>
<div class="ax" style="left:1248px;top:607.5px">96.320</div>
<div class="ax" style="left:1248px;top:640.5px">96.005</div>
<div class="ax" style="left:1248px;top:673.5px">95.690</div>
<div class="ax" style="left:8px;top:686.5px">12 Jul 2013</div>
<div class="ax" style="left:72px;top:686.5px">18 Jul 2013</div>
<div class="ax" style="left:136px;top:686.5px">24 Jul 2013</div>
<div class="ax" style="left:200px;top:686.5px">30 Jul 2013</div>
<div class="ax" style="left:264px;top:686.5px">5 Aug 2013</div>
<div class="ax" style="left:328px;top:686.5px">9 Aug 2013</div>
<div class="ax" style="left:392px;top:686.5px">15 Aug 2013</div>
<div class="ax" style="left:456px;top:686.5px">21 Aug 2013</div>
<div class="ax" style="left:520px;top:686.5px">27 Aug 2013</div>
<div class="ax" style="left:584px;top:686.5px">2 Sep 2013</div>
<div class="ax" style="left:648px;top:686.5px">6 Sep 2013</div>
<div class="ax" style="left:712px;top:686.5px">12 Sep 2013</div>
<div class="ax" style="left:776px;top:686.5px">18 Sep 2013</div>
<div class="ax" style="left:840px;top:686.5px">24 Sep 2013</div>
<div class="ax" style="left:904px;top:686.5px">30 Sep 2013</div>
<div class="ax" style="left:968px;top:686.5px">4 Oct 2013</div>
<div class="ax" style="left:1245px;top:488px;width:36.6px;height:11px;background:#000;color:#fff;-webkit-text-stroke-color:#fff;padding-left:3px;box-sizing:border-box">97.464</div>
<div class="ax" style="left:1245px;top:533px;width:36.6px;height:11px;background:#0000cd;color:#fff;-webkit-text-stroke-color:#fff;padding-left:3px;box-sizing:border-box">97.041</div>
<div class="ax" style="left:24px;top:112.5px;background:#fff;padding-right:190px;height:9px;transform:scaleX(0.96)">USDJPY,Daily</div>
<div class="ax" style="left:89.5px;top:112px">97.236</div>
<div class="ax" style="left:120.5px;top:112px">97.482</div>
<div class="ax" style="left:151.8px;top:112px">96.951</div>
<div class="ax" style="left:183px;top:112px">97.464</div>
<svg style="position:absolute;left:10px;top:113px" width="11" height="9"><path d="M1.5 3H9.5L5.5 7.5Z" fill="#000"/></svg>
<div class="ax" style="left:15px;top:478px;transform:scaleX(0.96);background:#fff;line-height:10px;height:8px;top:479px">#570086 tp</div>
<div class="ax" style="left:15px;top:528px;transform:scaleX(0.96);background:#fff;line-height:10px;height:8px;top:529px">#570086 buy 0.20</div>
<div style="position:absolute;left:978px;top:385px;font:20.5px 'Liberation Sans', sans-serif;color:#ff0000;-webkit-text-stroke:0.35px #ff0000">цель</div>
</body></html>
